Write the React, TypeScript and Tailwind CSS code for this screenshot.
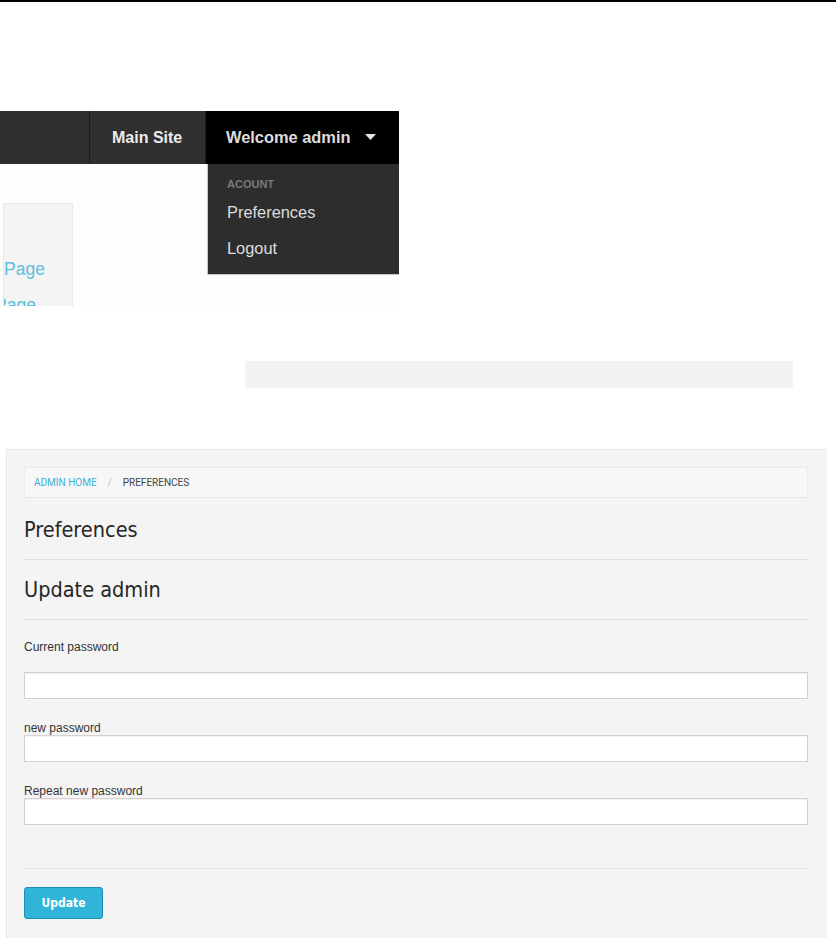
import React from "react";

const sans = "font-['Liberation_Sans',Arial,sans-serif]";
const narrow = "font-['DejaVu_Sans_Condensed','DejaVu_Sans',sans-serif] font-stretch-condensed";

function NavCrop() {
  return (
    <div className={`relative w-[399px] ${sans}`}>
      <div className="flex h-[53px]">
        <div className="w-[90px] border-r border-[#1b1b1b] bg-[#2f2f2f]" />
        <div className="flex w-[116px] items-center border-r border-[#1b1b1b] bg-[#2f2f2f] pl-[22px] text-[16px] font-bold text-[#ececec]">
          Main Site
        </div>
        <div className="flex flex-1 items-center bg-black pl-[20px] text-[16.4px] font-bold text-[#dcdcdc]">
          Welcome admin
          <svg width="11" height="6" viewBox="0 0 11 6" className="ml-[15px] mt-[-2px]">
            <path d="M0 0h11L5.5 6z" fill="#e6e6e6" />
          </svg>
        </div>
      </div>
      <div className="h-[142px] bg-[#fefefe] pt-[39px]">
        <div className="ml-[3px] h-[103px] w-[70px] overflow-hidden border-l border-r border-t border-[#e8e8e8] bg-[#f4f4f4] pt-[55px]">
          <div className="text-[17.5px] leading-[20px] text-[#5bc0de]">Page</div>
          <div className="-ml-[9px] mt-[16px] text-[17.5px] leading-[20px] text-[#5bc0de]">Page</div>
        </div>
      </div>
      <div className="absolute left-[207px] top-[53px] h-[111px] w-[192px] border-b border-l border-[#c8c8c8] bg-[#2d2d2d] pl-[19px] pt-[14px]">
        <div className="text-[11px] font-bold leading-[13px] text-[#7a7a7a]">ACOUNT</div>
        <div className="mt-[11px] text-[16.4px] leading-[20px] text-[#dedede]">Preferences</div>
        <div className="mt-[16px] text-[16.4px] leading-[20px] text-[#dedede]">Logout</div>
      </div>
    </div>
  );
}

function Field({ label, gap }: { label: string; gap: string }) {
  return (
    <div>
      <div className={`text-[12px] leading-[13px] text-[#333] ${sans}`}>{label}</div>
      <input
        type="password"
        className={`${gap} block h-[27px] w-full border border-[#d2d2d2] bg-white shadow-[inset_0_1px_1px_rgba(0,0,0,0.06)] outline-none`}
      />
    </div>
  );
}

function Panel() {
  return (
    <div className="ml-[6px] w-[821px] border-l border-t border-[#e6e6e6] bg-[#f4f4f4] pb-[19px] pl-[17px] pr-[19px] pt-[17px]">
      <div className="flex h-[31px] items-center gap-[11px] border border-[#eaeaea] bg-[#f7f7f7] pl-[9px] font-['Roboto',sans-serif] text-[10px]">
        <span className="text-[#3bb0d8]">ADMIN HOME</span>
        <span className="text-[#bbb]">/</span>
        <span className="text-[#444]">PREFERENCES</span>
      </div>
      <h1 className={`mt-[20px] text-[21.5px] leading-[24px] text-[#262626] ${narrow}`}>Preferences</h1>
      <div className="mt-[17px] h-px bg-[#e0e0e0]" />
      <h2 className={`mt-[18px] text-[21.5px] leading-[24px] text-[#262626] ${narrow}`}>Update admin</h2>
      <div className="mt-[17px] h-px bg-[#e0e0e0]" />
      <div className="mt-[21px]">
        <Field label="Current password" gap="mt-[18px]" />
      </div>
      <div className="mt-[23px]">
        <Field label="new password" gap="mt-0" />
      </div>
      <div className="mt-[23px]">
        <Field label="Repeat new password" gap="mt-0" />
      </div>
      <div className="mt-[43px] h-px bg-[#e6e6e6]" />
      <button
        className={`mt-[18px] flex h-[32px] w-[79px] items-center justify-center rounded-[3px] border border-[#1f8fb0] bg-[#30b4d7] text-[12px] font-bold text-white ${narrow}`}
      >
        Update
      </button>
    </div>
  );
}

export default function App() {
  return (
    <div className="min-h-[944px] bg-white">
      <div className="h-[1.5px] bg-black" />
      <div className="mt-[109.5px]">
        <NavCrop />
      </div>
      <div className="ml-[245px] mt-[55px] h-[27px] w-[548px] bg-[#f2f2f2]" />
      <div className="mt-[61px]">
        <Panel />
      </div>
    </div>
  );
}
